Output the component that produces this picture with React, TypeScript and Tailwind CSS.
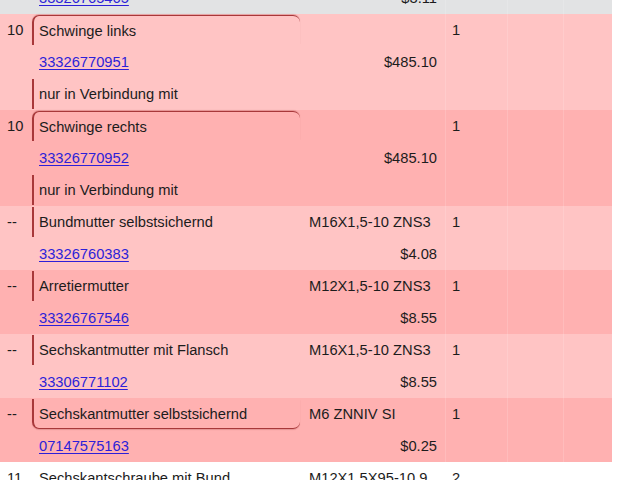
type Line = {
  pos?: string
  name?: string
  link?: string
  spec?: string
  price?: string
  qty?: string
  mark?: "top" | "bar" | "bottom"
}

type Group = { bg: string; lines: Line[] }

const groups: Group[] = [
  {
    bg: "bg-[#ffc4c4]",
    lines: [
      { pos: "10", name: "Schwinge links", qty: "1", mark: "top" },
      { link: "33326770951", price: "$485.10" },
      { name: "nur in Verbindung mit", mark: "bar" },
    ],
  },
  {
    bg: "bg-[#ffb1b1]",
    lines: [
      { pos: "10", name: "Schwinge rechts", qty: "1", mark: "top" },
      { link: "33326770952", price: "$485.10" },
      { name: "nur in Verbindung mit", mark: "bar" },
    ],
  },
  {
    bg: "bg-[#ffc4c4]",
    lines: [
      { pos: "--", name: "Bundmutter selbstsichernd", spec: "M16X1,5-10 ZNS3", qty: "1", mark: "bar" },
      { link: "33326760383", price: "$4.08" },
    ],
  },
  {
    bg: "bg-[#ffb1b1]",
    lines: [
      { pos: "--", name: "Arretiermutter", spec: "M12X1,5-10 ZNS3", qty: "1", mark: "bar" },
      { link: "33326767546", price: "$8.55" },
    ],
  },
  {
    bg: "bg-[#ffc4c4]",
    lines: [
      { pos: "--", name: "Sechskantmutter mit Flansch", spec: "M16X1,5-10 ZNS3", qty: "1", mark: "bar" },
      { link: "33306771102", price: "$8.55" },
    ],
  },
  {
    bg: "bg-[#ffb1b1]",
    lines: [
      { pos: "--", name: "Sechskantmutter selbstsichernd", spec: "M6 ZNNIV SI", qty: "1", mark: "bottom" },
      { link: "07147575163", price: "$0.25" },
    ],
  },
]

const markClass = {
  top: "border-l-2 border-t border-[#a8383a] rounded-t-[7px] shadow-[0_-1px_1px_rgba(120,30,30,0.2)]",
  bar: "border-l-2 border-[#a8383a]",
  bottom: "border-l-2 border-b border-[#a8383a] rounded-b-[7px] shadow-[0_1px_1px_rgba(120,30,30,0.2)]",
}

function Row({ line, bg }: { line: Line; bg: string }) {
  return (
    <div className={`grid grid-cols-[32px_268px_145px_62px_56px_49px] h-8 ${bg}`}>
      <div className="flex items-center pl-[7px] pt-px">{line.pos}</div>
      <div className="py-px">
        <div className={`h-full flex items-center pl-[5px] pt-px ${line.mark ? markClass[line.mark] : "pl-[7px]"}`}>
          {line.link ? (
            <a href="#" className="text-[#2d1fd8] underline underline-offset-2">
              {line.link}
            </a>
          ) : (
            line.name
          )}
        </div>
      </div>
      <div className={`flex items-center pl-[9px] pr-[8px] pt-px ${line.price ? "justify-end" : ""}`}>
        {line.price ?? line.spec}
      </div>
      <div className="flex items-center pl-[6px] pt-px border-l border-white/15">{line.qty}</div>
      <div className="border-l border-white/15" />
      <div className="border-l border-white/15" />
    </div>
  )
}

export default function App() {
  return (
    <div className="h-[480px] w-[640px] overflow-hidden bg-white text-[14.7px] text-[#1c1c1c] font-['Liberation_Sans',Arial,sans-serif]">
      <div className="w-[612px] -mt-[18px]">
        <Row bg="bg-[#e2e3e4]" line={{ link: "33326765465", price: "$3.11" }} />
        {groups.map((g, i) => (
          <div key={i}>
            {g.lines.map((l, j) => (
              <Row key={j} line={l} bg={g.bg} />
            ))}
          </div>
        ))}
        <Row
          bg="bg-white"
          line={{ pos: "11", name: "Sechskantschraube mit Bund", spec: "M12X1,5X95-10.9", qty: "2" }}
        />
      </div>
    </div>
  )
}
